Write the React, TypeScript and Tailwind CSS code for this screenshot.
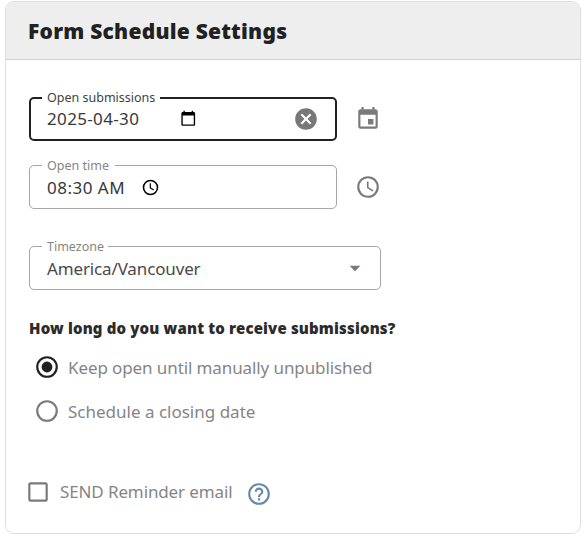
import type { ReactNode } from "react";

const paths = {
  clear:
    "M12,2C17.53,2 22,6.47 22,12C22,17.53 17.53,22 12,22C6.47,22 2,17.53 2,12C2,6.47 6.47,2 12,2M15.59,7L12,10.59L8.41,7L7,8.41L10.59,12L7,15.59L8.41,17L12,13.41L15.59,17L17,15.59L13.41,12L17,8.41L15.59,7Z",
  calendar:
    "M19,19H5V8H19M16,1V3H8V1H6V3H5C3.89,3 3,3.89 3,5V19A2,2 0 0,0 5,21H19A2,2 0 0,0 21,19V5C21,3.89 20.1,3 19,3H18V1M17,12H12V17H17V12Z",
  clock:
    "M12,20A8,8 0 0,0 20,12A8,8 0 0,0 12,4A8,8 0 0,0 4,12A8,8 0 0,0 12,20M12,2A10,10 0 0,1 22,12A10,10 0 0,1 12,22C6.47,22 2,17.5 2,12A10,10 0 0,1 12,2M12.5,7V12.25L17,14.92L16.25,16.15L11,13V7H12.5Z",
  datePicker:
    "M20 3h-1V1h-2v2H7V1H5v2H4c-1.1 0-2 .9-2 2v16c0 1.1.9 2 2 2h16c1.1 0 2-.9 2-2V5c0-1.1-.9-2-2-2zm0 18H4V8h16v13z",
  help: "M11,18H13V16H11V18M12,2A10,10 0 0,0 2,12A10,10 0 0,0 12,22A10,10 0 0,0 22,12A10,10 0 0,0 12,2M12,20C7.59,20 4,16.41 4,12C4,7.59 7.59,4 12,4C16.41,4 20,7.59 20,12C20,16.41 16.41,20 12,20M12,6A4,4 0 0,0 8,10H10A2,2 0 0,1 12,8A2,2 0 0,1 14,10C14,12 11,11.75 11,15H13C13,12.75 16,12.5 16,10A4,4 0 0,0 12,6Z",
  radioOn:
    "M12,20A8,8 0 0,1 4,12A8,8 0 0,1 12,4A8,8 0 0,1 20,12A8,8 0 0,1 12,20M12,2A10,10 0 0,0 2,12A10,10 0 0,0 12,22A10,10 0 0,0 22,12A10,10 0 0,0 12,2M12,7A5,5 0 0,0 7,12A5,5 0 0,0 12,17A5,5 0 0,0 17,12A5,5 0 0,0 12,7Z",
  radioOff:
    "M12,20A8,8 0 0,1 4,12A8,8 0 0,1 12,4A8,8 0 0,1 20,12A8,8 0 0,1 12,20M12,2A10,10 0 0,0 2,12A10,10 0 0,0 12,22A10,10 0 0,0 22,12A10,10 0 0,0 12,2Z",
  checkbox:
    "M19,3H5C3.89,3 3,3.89 3,5V19A2,2 0 0,0 5,21H19A2,2 0 0,0 21,19V5C21,3.89 20.1,3 19,3M19,5V19H5V5H19Z",
  menuDown: "M7,10L12,15L17,10H7Z",
};

function Icon({ name, className = "size-[26px] text-[#7a7a7a]" }: { name: keyof typeof paths; className?: string }) {
  return (
    <svg viewBox="0 0 24 24" fill="currentColor" className={`shrink-0 ${className}`}>
      <path d={paths[name]} />
    </svg>
  );
}

function Field({
  label,
  labelClass,
  className,
  children,
}: {
  label: string;
  labelClass: string;
  className: string;
  children: ReactNode;
}) {
  return (
    <div className={`relative flex h-11 shrink-0 items-center rounded-[5px] ${className}`}>
      <span className={`absolute left-[12px] h-4 bg-white pl-[5px] text-[12.5px] leading-4 ${labelClass}`}>{label}</span>
      {children}
    </div>
  );
}

function TimeIcon() {
  return (
    <svg viewBox="0 0 16 16" className="size-[17px] shrink-0" fill="none" stroke="#000">
      <circle cx="8" cy="8" r="6.6" strokeWidth="1.5" />
      <path d="M7.8 4v4.3l3.2 2" strokeWidth="1.1" />
    </svg>
  );
}

export default function App() {
  return (
    <div className="h-[539px] w-[586px] bg-white pl-[5px] pt-px font-['Noto_Sans',sans-serif] whitespace-nowrap">
      <section className="flex h-[533px] w-[576px] flex-col overflow-hidden rounded-[9px] border border-[#dedede] bg-white">
        <header className="flex h-[58px] shrink-0 items-center border-b border-[#d0d0d0] bg-[#eeeeee] pl-[22px]">
          <h1 className="text-[21px] leading-7 font-black tracking-[0.24px] text-[#212121]">Form Schedule Settings</h1>
        </header>

        <div className="flex flex-col pl-[23px]">
          <div className="mt-[37px] flex items-center gap-[18px]">
            <Field
              label="Open submissions"
              className="w-[308px] border-2 border-[#212121] pl-4"
              labelClass="-top-[9px] w-[118px] -ml-px text-[#3f3f3f]"
            >
              <span className="w-[133px] text-[17px] leading-6 tracking-[0.35px] text-[#383838]">2025-04-30</span>
              <Icon name="datePicker" className="-mt-[2px] size-[16.5px] text-black" />
              <Icon name="clear" className="ml-[96px] size-[26px] text-[#787878]" />
            </Field>
            <Icon name="calendar" />
          </div>

          <div className="mt-6 flex items-center gap-[18px]">
            <Field
              label="Open time"
              className="w-[308px] border border-[#a6a6a6] pl-[17px]"
              labelClass="-top-2 w-[73px] text-[#858585]"
            >
              <span className="mt-px w-[95px] text-[17px] leading-6 tracking-[0.5px] text-[#383838]">08:30 AM</span>
              <TimeIcon />
            </Field>
            <Icon name="clock" />
          </div>

          <Field
            label="Timezone"
            className="mt-[37px] w-[352px] justify-between border border-[#a6a6a6] pl-[17px] pr-3"
            labelClass="-top-2 w-[66px] text-[#858585]"
          >
            <span className="mt-px text-[17px] leading-6 tracking-[-0.14px] text-[#4a4a4a]">America/Vancouver</span>
            <Icon name="menuDown" />
          </Field>

          <h2 className="mt-[27px] mb-px text-[15px] leading-[22px] font-black tracking-[0.16px] text-[#2b2b2b]">
            How long do you want to receive submissions?
          </h2>

          <div className="mt-[14px] ml-[5px] flex h-[26px] items-center gap-[8px]">
            <Icon name="radioOn" className="size-[26px] text-[#212121]" />
            <span className="mt-px text-[17px] leading-6 tracking-[-0.1px] text-[#858585]">Keep open until manually unpublished</span>
          </div>
          <div className="mt-[18px] ml-[5px] flex h-[26px] items-center gap-[8px]">
            <Icon name="radioOff" />
            <span className="mt-px text-[17px] leading-6 text-[#858585]">Schedule a closing date</span>
          </div>

          <div className="mt-[55px] -ml-[4px] flex h-[26px] items-center">
            <Icon name="checkbox" />
            <span className="ml-[9px] w-[173px] text-[17px] leading-6 tracking-[-0.12px] text-[#858585]">SEND Reminder email</span>
            <Icon name="help" className="mt-[4px] ml-[13px] size-[26px] text-[#6888aa]" />
          </div>
        </div>
      </section>
    </div>
  );
}
